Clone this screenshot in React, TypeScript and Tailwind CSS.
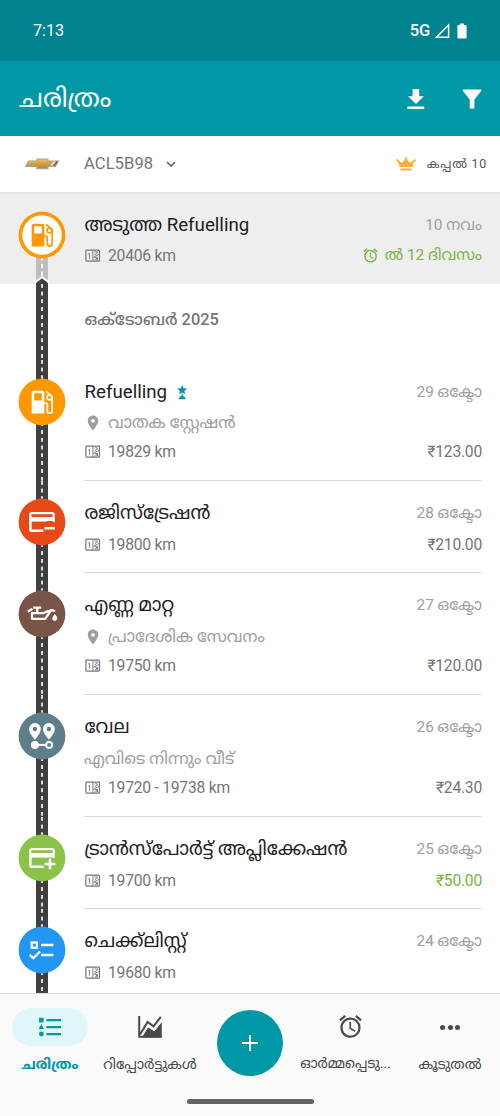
import React from "react";
import { MdAlarm, MdLocationOn } from "react-icons/md";

type Kind = "next" | "fuel" | "cardMinus" | "oil" | "route" | "cardPlus" | "check";

function Pump({ color, bg }: { color: string; bg: string }) {
  return (
    <g>
      <path d="M-10.3 11.6V-9.3a2 2 0 0 1 2-2H.3a2 2 0 0 1 2 2V11.6z" fill={color} />
      <rect x="-7.8" y="-8.8" width="7.6" height="7.2" rx="0.4" fill={bg} />
      <g fill="none" stroke={color} strokeWidth="1.7">
        <path d="M2.2 1.2H3.6Q5.3 1.2 5.3 3V8.8a2.4 2.4 0 0 0 4.8 0V-5.2L4.2-10.6" />
        <circle cx="7.5" cy="-4.6" r="2.4" />
      </g>
    </g>
  );
}

function Badge({ kind }: { kind: Kind }) {
  const fills: Record<Kind, string> = {
    next: "#fff",
    fuel: "#ff9800",
    cardMinus: "#e64a19",
    oil: "#795548",
    route: "#607d8b",
    cardPlus: "#8bc34a",
    check: "#2196f3",
  };
  const bg = fills[kind];
  return (
    <svg className="block size-12" viewBox="-24 -24 48 48">
      <circle r="23.4" fill={kind === "next" ? "#ff9800" : bg} />
      {kind === "next" && <circle r="19.8" fill="#fff" />}
      {kind === "next" && <Pump color="#ff9800" bg="#fff" />}
      {kind === "fuel" && <Pump color="#fff" bg={bg} />}
      {(kind === "cardMinus" || kind === "cardPlus") && (
        <g>
          <rect x="-11.6" y="-8.8" width="23.2" height="17.6" rx="1.6" fill="none" stroke="#fff" strokeWidth="2.5" />
          <rect x="-11" y="-5" width="22" height="4.6" fill="#fff" />
          <rect x="-10.4" y="-7.6" width="20.8" height="2.5" fill={bg} />
          {kind === "cardMinus" ? (
            <g>
              <path d="M1.4 11V5.6Q2-.8 7.5-1.2Q11-1.2 13.5 1V11z" fill={bg} />
              <path d="M2.4 6.2h10.6" stroke="#fff" strokeWidth="2.5" />
            </g>
          ) : (
            <g>
              <path d="M1.6 11V3.6H5.4V-.3H14V11z" fill={bg} />
              <path d="M2.7 5.9H13.3M8 .6V11.2" stroke="#fff" strokeWidth="2.5" />
            </g>
          )}
        </g>
      )}
      {kind === "oil" && (
        <g fill="none" stroke="#fff" strokeWidth="2.3" strokeLinejoin="round">
          <path d="M-10-.8V4.9H3.2L8.8-3.4L4.2-2.2L1.4-.8z" />
          <path d="M-4.8-.8V-6.2M-8.8-6.4H-.8M-14.2-2.2L-9.6-5.2M8-3.6Q11-4.6 13-2.4" />
          <path d="M12.8.6Q17 5.8 12.8 6.6Q8.6 5.8 12.8.6z" fill="#fff" stroke="#fff" strokeWidth="1" />
        </g>
      )}
      {kind === "route" && (
        <g>
          <path d="M-7.1 3.7C-10.5-.6-13-4-13-7.1a5.9 5.9 0 0 1 11.8 0C-1.2-4-3.7-.6-7.1 3.7zM6.9 3.7C3.5-.6 1-4 1-7.1a5.9 5.9 0 0 1 11.8 0C12.8-4 10.3-.6 6.9 3.7z" fill="#fff" />
          <circle cx="-7.1" cy="-7" r="2.2" fill={bg} />
          <circle cx="6.9" cy="-7" r="2.2" fill={bg} />
          <path d="M-7 8.9H4" stroke="#fff" strokeWidth="2" />
          <circle cx="-7.1" cy="8.9" r="4" fill="#fff" />
          <circle cx="7.1" cy="8.9" r="2.9" fill="none" stroke="#fff" strokeWidth="2" />
        </g>
      )}
      {kind === "check" && (
        <g fill="none" stroke="#fff" strokeWidth="2.3">
          <rect x="-10.3" y="-7.5" width="5.2" height="5.2" />
          <path d="M-.9-5H11.4M-.9 5H11.4" />
          <path d="M-12.2 4.8L-8.6 8.2L-2 1.5" />
        </g>
      )}
    </svg>
  );
}

function Odo() {
  return (
    <svg className="ml-px block h-[14px] w-4 shrink-0" viewBox="0 0 16 14" fill="none" stroke="#757575">
      <rect x=".9" y="1.1" width="13.6" height="11" rx=".8" strokeWidth="1.2" />
      <path d="M7.9 1.5V12M3.2 5.1L4.6 4.4V9.8M9.6 2.9H12.3V4.2L10 5.6V6.4M8.2 8.4L14 5.4M10 8.4H12.5V10.8H10M10.8 9.6H12.5" strokeWidth=".9" />
    </svg>
  );
}

function Road() {
  return (
    <div className="h-full w-3 bg-[#404040] [grid-area:1/1]">
      <div className="mx-auto h-full w-[2px] bg-[repeating-linear-gradient(to_bottom,#dadada_0px,#dadada_3.4px,transparent_4px,transparent_7.3px,#dadada_7.8px)]" />
    </div>
  );
}

interface Entry {
  kind: Kind;
  title: string;
  tw: string;
  star?: boolean;
  place?: string;
  plain?: string;
  km: string;
  date: string;
  price?: string;
  green?: boolean;
  h: string;
}

const entries: Entry[] = [
  { kind: "fuel", title: "Refuelling", tw: "h-[31px]", star: true, place: "വാതക സ്റ്റേഷൻ", km: "19829 km", date: "29 ഒക്ടോ", price: "₹123.00", h: "h-[121px]" },
  { kind: "cardMinus", title: "രജിസ്ട്രേഷൻ", tw: "h-[33px]", km: "19800 km", date: "28 ഒക്ടോ", price: "₹210.00", h: "h-[92px]" },
  { kind: "oil", title: "എണ്ണ മാറ്റ", tw: "h-[33px]", place: "പ്രാദേശിക സേവനം", km: "19750 km", date: "27 ഒക്ടോ", price: "₹120.00", h: "h-[122px]" },
  { kind: "route", title: "വേല", tw: "h-[33px]", plain: "എവിടെ നിന്നും വീട്", km: "19720 - 19738 km", date: "26 ഒക്ടോ", price: "₹24.30", h: "h-[122px]" },
  { kind: "cardPlus", title: "ട്രാൻസ്പോർട്ട് അപ്ലിക്കേഷൻ", tw: "h-[33px]", km: "19700 km", date: "25 ഒക്ടോ", price: "₹50.00", green: true, h: "h-[92px]" },
  { kind: "check", title: "ചെക്ക്‌ലിസ്റ്റ്", tw: "h-[33px]", km: "19680 km", date: "24 ഒക്ടോ", h: "h-[84px]" },
];

function Row({ e, last }: { e: Entry; last: boolean }) {
  const first = e.kind === "fuel";
  return (
    <div className={`flex shrink-0 overflow-hidden ${e.h}`}>
      <div className="grid w-[84px] shrink-0 justify-items-center">
        <Road />
        <div className={`[grid-area:1/1] ${first ? "mt-[18px]" : "mt-[17px]"}`}>
          <Badge kind={e.kind} />
        </div>
      </div>
      <div className={`mr-[18px] flex-1 ${first ? "pt-[17px]" : "pt-4"} ${last ? "" : "border-b border-[#dcdcdc]"}`}>
        <div className={`flex items-center justify-between ${e.tw}`}>
          <div className="flex items-center gap-2">
            <span className="pl-[0.5px] text-[18.7px] text-[#212121]">{e.title}</span>
            {e.star && (
              <svg className="h-[15px] w-[14px]" viewBox="0 0 14 15" fill="#0097a7">
                <path d="M7.2 0L8.6 3.3L12.2 3.6L9.4 5.9L10.3 9.3L7.2 7.5L4.1 9.3L5 5.9L2.2 3.6L5.8 3.3zM6.6 8.6H7.8V10.9Q10 11.4 10.5 13.2V14.2H3.9V13.2Q4.4 11.4 6.6 10.9z" />
              </svg>
            )}
          </div>
          <span lang="ml" className="text-[15.4px] tracking-[-0.05px] text-[#9e9e9e]">{e.date}</span>
        </div>
        {e.place && (
          <div className="flex h-[29.5px] items-center text-[16.4px] text-[#9e9e9e]">
            <MdLocationOn className="mr-[6px] size-[18px]" />
            {e.place}
          </div>
        )}
        {e.plain && <div className="flex h-[29.5px] items-center text-[16.4px] text-[#9e9e9e]">{e.plain}</div>}
        <div className="flex h-[29.5px] items-center text-[15.7px] tracking-[-0.25px] text-[#757575]">
          <Odo />
          <span className="ml-[7px] flex-1">{e.km}</span>
          <span className={e.green ? "text-[#7cb342]" : ""}>{e.price}</span>
        </div>
      </div>
    </div>
  );
}

export default function App() {
  return (
    <div className="flex h-[1116px] w-[500px] flex-col overflow-hidden whitespace-nowrap bg-white font-['Roboto','Noto_Sans_Malayalam','Noto_Sans',sans-serif] leading-none">
      <div className="flex h-[61px] shrink-0 items-center bg-[#00838f] pl-[33px] pr-[30px] text-white">
        <span className="flex-1 pt-px text-[16.2px]">7:13</span>
        <span className="pt-[2px] text-[16.5px] font-medium tracking-[-0.2px]">5G</span>
        <svg className="ml-1 h-4 w-[36px]" viewBox="0 0 36 16">
          <path d="M2.4 14.3L14.6 2V14.3z" fill="none" stroke="#fff" strokeWidth="1.5" />
          <path d="M24.5 2H26V.6H30V2H31.5Q32.6 2 32.6 3V14.5Q32.6 15.5 31.5 15.5H24.5Q23.4 15.5 23.4 14.5V3Q23.4 2 24.5 2z" fill="#fff" />
        </svg>
      </div>
      <div className="flex h-[75px] shrink-0 items-center bg-[#0097a7] pl-[19px] pr-[18px] text-white">
        <span className="flex-1 text-[25.6px]">ചരിത്രം</span>
        <svg className="h-5 w-[18px]" viewBox="0 0 18 20" fill="#fff">
          <path d="M5.6 0H12.2V7.2H16.8L9 15L1 7.2H5.6zM.4 17.6H17.2V20H.4z" />
        </svg>
        <svg className="ml-[37px] h-5 w-5" viewBox="0 0 20 20" fill="#fff">
          <path d="M1.2.4H18.8Q19.9.8 19.3 1.8L12.4 10.4V18.4Q12.3 19.6 11.2 19.6H8.9Q7.8 19.6 7.7 18.4V10.4L.8 1.8Q.2.8 1.2.4z" />
        </svg>
      </div>
      <div className="flex h-[58px] shrink-0 items-center border-b-2 border-[#e2e2e2] pl-[25px] pr-[13px]">
        <svg className="h-3 w-[35px]" viewBox="0 0 35 12">
          <defs>
            <linearGradient id="bow" x1="0" y1="0" x2="0" y2="1">
              <stop offset="0" stopColor="#e8c468" />
              <stop offset=".55" stopColor="#d29d38" />
              <stop offset="1" stopColor="#b48733" />
            </linearGradient>
          </defs>
          <path d="M3.6 3H12V1H23V3H33.6L30.4 8.4H23V10.6H11.8V8.4H.8z" fill="url(#bow)" stroke="#a8a39a" strokeWidth="1.1" />
          <path d="M28.8 7.8L32.2 3.5" stroke="#666" strokeWidth="1.4" />
          <path d="M26.2 7.4L29.8 3.8" stroke="#eee" strokeWidth="1.4" />
        </svg>
        <span className="ml-6 text-[16.6px] tracking-[0.05px] text-[#757575]">ACL5B98</span>
        <svg className="ml-[12px] h-3 w-3" viewBox="0 0 12 12" fill="none" stroke="#666" strokeWidth="1.6">
          <path d="M2 4L6 8L10 4" />
        </svg>
        <svg className="ml-auto h-[14px] w-5" viewBox="0 0 20 14" fill="#fbb03b">
          <path d="M3.6 10L2 4.8L.6 4.4A1.3 1.3 0 1 1 2.8 3.6L6.2 6L9 2.6A1.3 1.3 0 1 1 11 2.6L13.8 6L17.2 3.6A1.3 1.3 0 1 1 19.4 4.4L18 4.8L16.4 10zM4.4 11.6H15.6V13.6H4.4z" />
        </svg>
        <span className="ml-[11px] text-[12.4px] tracking-[0.75px] text-[#555]">കപ്പൽ 10</span>
      </div>
      <div className="flex h-[90px] shrink-0 bg-[#eeeeee]">
        <div className="grid w-[84px] shrink-0 justify-items-center">
          <svg className="h-[90px] w-[14px] [grid-area:1/1]" viewBox="0 0 14 90">
            <rect x="1" y="50" width="12" height="40" fill="#bdbdbd" />
            <path d="M7 62V82" stroke="#f5f5f5" strokeWidth="2" strokeDasharray="4.4 3.4" />
            <path d="M0 90V87L7 82L14 87V90z" fill="#fff" />
            <path d="M1 90V89L7 84.2L13 89V90z" fill="#404040" />
          </svg>
          <div className="mt-[17px] [grid-area:1/1]">
            <Badge kind="next" />
          </div>
        </div>
        <div className="mr-[18px] flex-1 pt-[15px]">
          <div className="flex h-[32px] items-center justify-between">
            <span className="pl-[0.5px] text-[18.7px] text-[#212121]">അടുത്ത Refuelling</span>
            <span className="pt-px text-[15.4px] text-[#9e9e9e]">10 നവം</span>
          </div>
          <div className="flex h-[29.5px] items-center text-[15.7px] text-[#757575]">
            <Odo />
            <span className="ml-[7px] flex-1 tracking-[-0.25px]">20406 km</span>
            <MdAlarm className="mr-[5.5px] mt-[-1px] size-[17px] text-[#7cb342]" />
            <span className="text-[15.4px] text-[#7cb342]">ൽ 12 ദിവസം</span>
          </div>
        </div>
      </div>
      <div className="flex h-[76px] shrink-0">
        <div className="grid w-[84px] shrink-0 justify-items-center">
          <Road />
        </div>
        <span className="mt-[28px] pl-[0.5px] text-[16.4px] font-medium text-[#757575]">ഒക്‌ടോബർ 2025</span>
      </div>
      <div className="flex h-[633px] shrink-0 flex-col overflow-hidden">
        {entries.map((e, i) => (
          <Row key={e.kind} e={e} last={i === entries.length - 1} />
        ))}
      </div>
      <div className="flex flex-1 flex-col border-t border-[#dcdcdc] bg-[#fafafa]">
        <div className="grid h-[96px] grid-cols-5 text-center text-[14.1px] text-[#4a4a4a]">
          <div className="flex flex-col items-center pt-[14px] font-bold text-[#0097a7]">
            <div className="flex h-[38px] w-[76px] items-center justify-center rounded-full bg-[#e0f7fa]">
              <svg className="h-5 w-[22px]" viewBox="0 0 22 20" fill="#0097a7">
                <path d="M0 .8H4.6V5.4H0zM2.3 7.2L5 12H-.4zM7.4 2H22V4.2H7.4zM7.4 9H22V11.2H7.4zM7.4 16H22V18.2H7.4z" />
                <circle cx="2.4" cy="17" r="2.4" />
              </svg>
            </div>
            <span className="mt-[11px]">ചരിത്രം</span>
          </div>
          <div className="flex flex-col items-center pt-[14px]">
            <div className="flex h-[38px] items-center">
              <svg className="h-[22px] w-6" viewBox="0 0 24 22">
                <path d="M1.2 0V20.8H23.6" fill="none" stroke="#4a4a4a" strokeWidth="2" />
                <path d="M4.6 20.6L10 11.4L16.4 15.2L23.8 6.2V21.6H4.6z" fill="#4a4a4a" />
                <path d="M2 18.6L9.6 6L15.6 10.4L22.8.8" fill="none" stroke="#4a4a4a" strokeWidth="2" />
              </svg>
            </div>
            <span className="mt-[11px]">റിപ്പോർട്ടുകൾ</span>
          </div>
          <div className="flex justify-center pt-4">
            <div className="flex size-[66px] items-center justify-center rounded-full bg-[#0097a7]">
              <svg className="size-4" viewBox="0 0 16 16" stroke="#fff" strokeWidth="2">
                <path d="M0 8H16M8 0V16" />
              </svg>
            </div>
          </div>
          <div className="flex flex-col items-center pt-[14px]">
            <div className="flex h-[38px] items-center">
              <MdAlarm className="mt-[-2px] size-[27px]" />
            </div>
            <span className="mr-[9px] mt-[11px] text-[13.9px]">ഓർമ്മപ്പെടു...</span>
          </div>
          <div className="flex flex-col items-center pt-[14px]">
            <div className="flex h-[38px] items-center gap-[2.5px]">
              <span className="size-[5px] rounded-full bg-[#4a4a4a]" />
              <span className="size-[5px] rounded-full bg-[#4a4a4a]" />
              <span className="size-[5px] rounded-full bg-[#4a4a4a]" />
            </div>
            <span className="mt-[11px]">കൂടുതൽ</span>
          </div>
        </div>
        <div className="mx-auto mt-[9px] h-[5px] w-[127px] rounded-full bg-[#636363]" />
      </div>
    </div>
  );
}
